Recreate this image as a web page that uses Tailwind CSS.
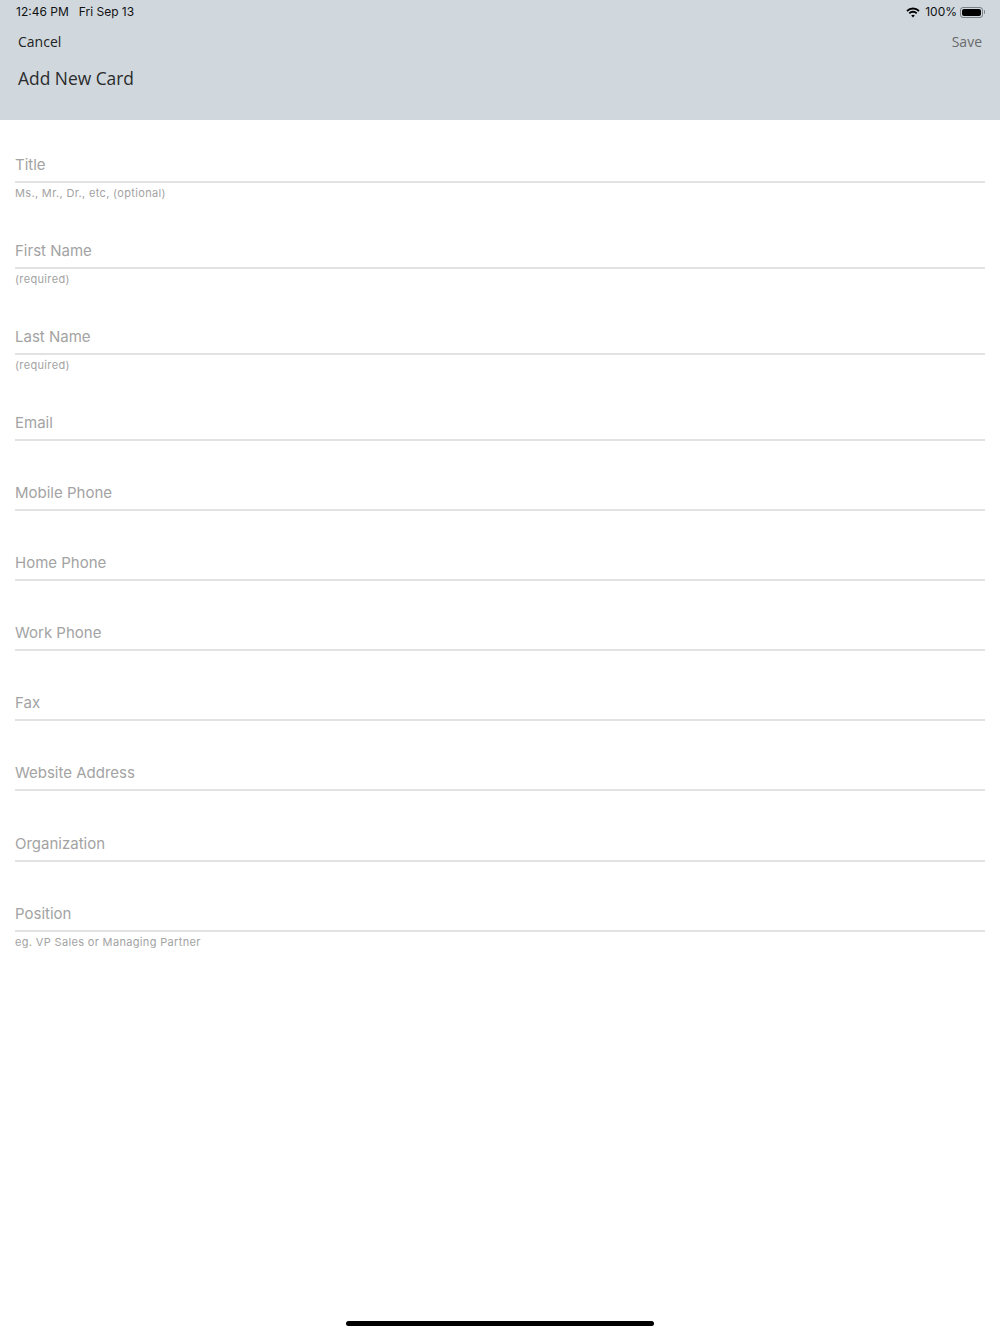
<!DOCTYPE html>
<html lang="en">
  <head>
    <meta charset="UTF-8" />
    <meta name="viewport" content="width=device-width, initial-scale=1.0" />
    <title>Add New Card</title>
    <script src="https://cdn.jsdelivr.net/npm/@tailwindcss/browser@4"></script>
  </head>
  <body class="bg-white font-['Inter',sans-serif] antialiased">
    <div class="relative h-[1334px] w-[1000px] overflow-hidden">
      <header class="h-[120px] bg-[#d0d8de]">
        <div class="flex h-6 items-center justify-between pl-4 pr-[15px] text-xs text-[#111]">
          <div class="flex gap-[10px]">
            <span>12:46 PM</span>
            <span>Fri Sep 13</span>
          </div>
          <div class="flex items-center">
            <svg class="mr-[5px]" width="14" height="11" viewBox="0 0 14 11" fill="none" stroke="#000" stroke-width="1.8">
              <path d="M1 4 A8.5 8.5 0 0 1 13 4" />
              <path d="M3.3 6.3 A5.2 5.2 0 0 1 10.7 6.3" />
              <path d="M7 10.6 L5.2 8.5 A2.6 2.6 0 0 1 8.8 8.5 Z" fill="#000" stroke="none" />
            </svg>
            <span class="mr-[3px]">100%</span>
            <div class="flex items-center gap-px">
              <div class="h-[11px] w-[23px] rounded-[3px] border border-black/40 p-px">
                <div class="h-full rounded-[2px] bg-black"></div>
              </div>
              <div class="h-1 w-px rounded-r-sm bg-black/40"></div>
            </div>
          </div>
        </div>
        <div class="mt-[6px] flex items-center justify-between px-[18px] font-['Open_Sans',sans-serif] text-sm leading-6">
          <span class="font-medium text-[#222]">Cancel</span>
          <span class="font-medium text-[#6a6a6a]">Save</span>
        </div>
        <h1 class="mt-3 pl-[18px] font-['Open_Sans',sans-serif] text-[17.4px] leading-6 text-[#2b2b2b]">Add New Card</h1>
      </header>

      <form class="flex flex-col px-[15px] pt-[18.6px] text-[15px] text-[#a3a3a3]">
        <div class="mb-[26.2px]">
          <div class="flex h-11 items-center border-b-2 border-[#e2e2e2] pt-[9px] leading-none">Title</div>
          <p class="h-[15.8px] pt-[3px] text-[11px] leading-[15px] tracking-[0.34px]">Ms., Mr., Dr., etc, (optional)</p>
        </div>
        <div class="mb-[26.2px]">
          <div class="flex h-11 items-center border-b-2 border-[#e2e2e2] pt-[9px] leading-none">First Name</div>
          <p class="h-[15.8px] pt-[3px] text-[11px] leading-[15px] tracking-[0.34px]">(required)</p>
        </div>
        <div class="mb-[26.2px]">
          <div class="flex h-11 items-center border-b-2 border-[#e2e2e2] pt-[9px] leading-none">Last Name</div>
          <p class="h-[15.8px] pt-[3px] text-[11px] leading-[15px] tracking-[0.34px]">(required)</p>
        </div>
        <div class="mb-[26.2px] flex h-11 items-center border-b-2 border-[#e2e2e2] pt-[9px] leading-none">Email</div>
        <div class="mb-[26.2px] flex h-11 items-center border-b-2 border-[#e2e2e2] pt-[9px] leading-none">Mobile Phone</div>
        <div class="mb-[26.2px] flex h-11 items-center border-b-2 border-[#e2e2e2] pt-[9px] leading-none">Home Phone</div>
        <div class="mb-[26.2px] flex h-11 items-center border-b-2 border-[#e2e2e2] pt-[9px] leading-none">Work Phone</div>
        <div class="mb-[26.2px] flex h-11 items-center border-b-2 border-[#e2e2e2] pt-[9px] leading-none">Fax</div>
        <div class="mb-[26.2px] flex h-11 items-center border-b-2 border-[#e2e2e2] pt-[9px] leading-none">Website Address</div>
        <div class="mb-[26.2px] flex h-11 items-center border-b-2 border-[#e2e2e2] pt-[9px] leading-none">Organization</div>
        <div>
          <div class="flex h-11 items-center border-b-2 border-[#e2e2e2] pt-[9px] leading-none">Position</div>
          <p class="h-[15.8px] pt-[3px] text-[11px] leading-[15px] tracking-[0.34px]">eg. VP Sales or Managing Partner</p>
        </div>
      </form>

      <div class="absolute bottom-2 left-[346px] h-[5px] w-[308px] rounded-full bg-black"></div>
    </div>
  </body>
</html>
